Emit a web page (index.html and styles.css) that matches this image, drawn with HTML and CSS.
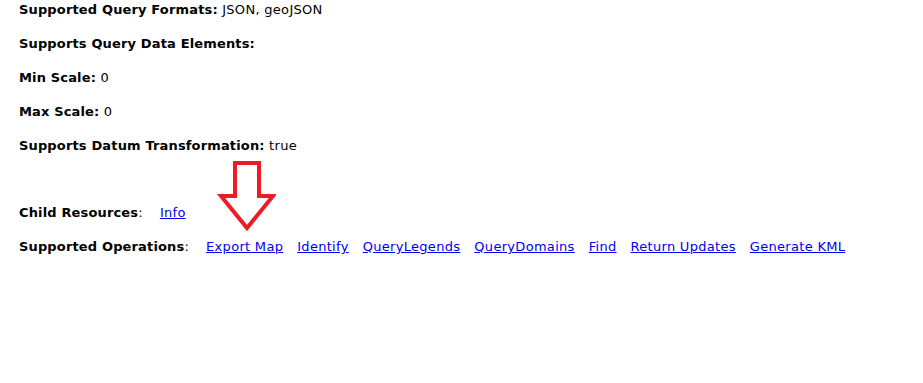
FILE: index.html
```html
<!DOCTYPE html>
<html>
<head>
<meta charset="utf-8">
<link rel="stylesheet" href="styles.css">
</head>
<body>
<div class="content">
  <div class="prop"><b>Supported Query Formats:</b> JSON, geoJSON</div>
  <div class="prop"><b>Supports Query Data Elements:</b></div>
  <div class="prop"><b>Min Scale:</b> 0</div>
  <div class="prop"><b>Max Scale:</b> 0</div>
  <div class="prop"><b>Supports Datum Transformation:</b> true</div>
  <div class="prop spaced"><b>Child Resources</b>:<a class="link first" href="#">Info</a></div>
  <div class="prop"><b>Supported Operations</b>:<a class="link first" href="#">Export Map</a><a class="link" href="#">Identify</a><a class="link" href="#">QueryLegends</a><a class="link" href="#">QueryDomains</a><a class="link" href="#">Find</a><a class="link" href="#">Return Updates</a><a class="link" href="#">Generate KML</a></div>
  <svg class="arrow" width="60" height="76" viewBox="0 0 60 76" aria-hidden="true">
    <polygon points="13,2 37,2 37,35 51,35 25,67 -1,35 13,35" transform="translate(6,0)" fill="none" stroke="#ed1c24" stroke-width="4" stroke-linejoin="miter"/>
  </svg>
</div>
</body>
</html>
```
FILE: styles.css
```css
html, body {
  margin: 0;
  padding: 0;
  background: #fff;
}
.content {
  position: relative;
  padding: 1px 0 0 19px;
  font-family: "DejaVu Sans", Verdana, sans-serif;
  font-size: 13px;
  letter-spacing: 0.3px;
  color: #000;
}
.prop {
  line-height: 17px;
  margin-bottom: 17px;
  white-space: nowrap;
}
.prop b {
  font-weight: bold;
  letter-spacing: 0.15px;
}
.spaced {
  margin-top: 50px;
}
.link {
  color: #0000ee;
  text-decoration: underline;
  margin-left: 14px;
}
.link.first {
  margin-left: 17px;
}
.arrow {
  position: absolute;
  left: 216px;
  top: 161px;
}
```
